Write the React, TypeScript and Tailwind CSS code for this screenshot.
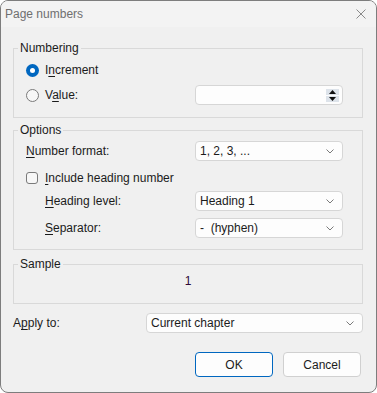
import { ReactNode } from "react"

const font = { fontFamily: '"Liberation Sans", Arial, sans-serif' }

const Chevron = () => (
    <svg width="8" height="5" viewBox="0 0 8 5" className="shrink-0">
        <path d="M0.5 0.5 L4 4 L7.5 0.5" fill="none" stroke="#7a7a7a" strokeWidth="1" />
    </svg>
)

const Select = ({ value, width = "w-[148px]" }: { value: string, width?: string }) => (
    <div className={`${width} h-[20px] flex items-center justify-between pl-[4px] pr-[8px] bg-[#fdfdfd] border border-[#d6d6d6] rounded-[4px] text-[12px] text-[#1b1b1b]`}>
        <span className="whitespace-pre">{value}</span>
        <Chevron />
    </div>
)

const Group = ({ title, className = "", children }: { title: string, className?: string, children: ReactNode }) => (
    <fieldset className={`border border-[#d9d9d9] pl-[4px] pr-[19px] ${className}`}>
        <legend className="px-[2px] leading-4 text-[12px] text-[#1b1b1b]">{title}</legend>
        {children}
    </fieldset>
)

const Row = ({ label, indent = false, mnemonic, value }: { label: string, indent?: boolean, mnemonic: number, value: string }) => (
    <div className="flex items-center justify-between h-[20px]">
        <span className={indent ? "pl-[19px]" : ""}>
            {label.slice(0, mnemonic)}
            <u className="underline-offset-2">{label[mnemonic]}</u>
            {label.slice(mnemonic + 1)}
        </span>
        <Select value={value} />
    </div>
)

export default function App() {
    return (
        <div className="w-[377px] h-[393px] bg-white" style={font}>
            <div className="w-[377px] h-[393px] flex flex-col border border-[#7d7d7d] rounded-[8px] overflow-hidden bg-[#f0f0f0] text-[12px] text-[#1b1b1b]">
                {/* title bar */}
                <div className="h-[26px] shrink-0 flex items-center justify-between pl-[4px] pr-[10px] bg-[#f3f3f3]">
                    <span className="text-[12px] text-[#6f6f6f]">Page numbers</span>
                    <svg width="10" height="10" viewBox="0 0 10 10">
                        <path d="M0.5 0.5 L9.5 9.5 M9.5 0.5 L0.5 9.5" stroke="#8a8a8a" strokeWidth="1" />
                    </svg>
                </div>

                <div className="flex flex-col pl-[12px] pr-[13px] pt-[13px]">
                    <Group title="Numbering" className="pb-[12px]">
                        <div className="pl-[8px] pt-[4px] flex flex-col gap-[5px]">
                            <div className="flex items-center h-[20px] gap-[6px]">
                                <span className="w-[13px] h-[13px] rounded-full bg-[#0067c0] flex items-center justify-center">
                                    <span className="w-[5px] h-[5px] rounded-full bg-white" />
                                </span>
                                <span>I<u className="underline-offset-2">n</u>crement</span>
                            </div>
                            <div className="flex items-center justify-between h-[20px]">
                                <div className="flex items-center gap-[6px]">
                                    <span className="w-[13px] h-[13px] rounded-full border border-[#7a7a7a] bg-[#f7f7f7]" />
                                    <span>V<u className="underline-offset-2">a</u>lue:</span>
                                </div>
                                <div className="w-[148px] h-[20px] flex items-center justify-end pr-[3px] bg-[#fdfdfd] border border-[#d6d6d6] rounded-[4px]">
                                    <div className="flex flex-col w-[13px] h-[13px] gap-[1px]">
                                        <div className="h-[6px] bg-[#dde3ea] flex items-center justify-center">
                                            <svg width="7" height="4" viewBox="0 0 7 4"><path d="M0 4 L3.5 0 L7 4 Z" fill="#111" /></svg>
                                        </div>
                                        <div className="h-[6px] bg-[#dde3ea] flex items-center justify-center">
                                            <svg width="7" height="4" viewBox="0 0 7 4"><path d="M0 0 L3.5 4 L7 0 Z" fill="#111" /></svg>
                                        </div>
                                    </div>
                                </div>
                            </div>
                        </div>
                    </Group>

                    <Group title="Options" className="mt-[4px] pb-[11px]">
                        <div className="pl-[8px] pt-[3px] flex flex-col">
                            <Row label="Number format:" mnemonic={0} value="1, 2, 3, ..." />
                            <div className="flex items-center h-[20px] gap-[7px] mt-[7px]">
                                <span className="w-[12px] h-[12px] rounded-[3px] border border-[#7a7a7a] bg-[#f7f7f7]" />
                                <span><u className="underline-offset-2">I</u>nclude heading number</span>
                            </div>
                            <div className="mt-[3px]">
                                <Row label="Heading level:" indent mnemonic={0} value="Heading 1" />
                            </div>
                            <div className="mt-[7px]">
                                <Row label="Separator:" indent mnemonic={0} value="-  (hyphen)" />
                            </div>
                        </div>
                    </Group>

                    <Group title="Sample" className="mt-[6px] pb-[14px]">
                        <div className="pl-[15px] pt-[1px] leading-4 text-center text-[#2e0a36]">1</div>
                    </Group>

                    <div className="flex items-center justify-between h-[20px] mt-[9px]">
                        <span>A<u className="underline-offset-2">p</u>ply to:</span>
                        <Select value="Current chapter" width="w-[217px]" />
                    </div>

                    <div className="flex justify-end gap-[10px] pr-[2px] mt-[19px]">
                        <button className="w-[78px] h-[25px] rounded-[4px] border border-[#0067c0] bg-[#fdfdfd] text-[12px] text-[#1b1b1b]">OK</button>
                        <button className="w-[78px] h-[25px] rounded-[4px] border border-[#d0d0d0] bg-[#fdfdfd] text-[12px] text-[#1b1b1b]">Cancel</button>
                    </div>
                </div>
            </div>
        </div>
    )
}
